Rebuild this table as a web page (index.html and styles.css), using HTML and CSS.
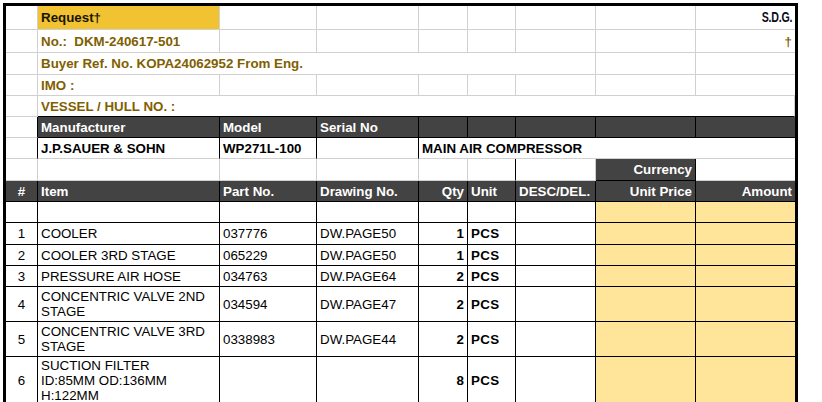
FILE: index.html
```html
<!DOCTYPE html>
<html lang="en">
<head>
<meta charset="utf-8">
<title>Request DKM-240617-501</title>
<link rel="stylesheet" href="styles.css">
</head>
<body>
<table class="sheet">
  <colgroup>
    <col class="c-no">
    <col class="c-item">
    <col class="c-part">
    <col class="c-draw">
    <col class="c-qty">
    <col class="c-unit">
    <col class="c-desc">
    <col class="c-price">
    <col class="c-amount">
  </colgroup>
  <tbody>
    <tr class="r-a">
      <td class="g"></td>
      <td class="g req">Request†</td>
      <td class="g"></td><td class="g"></td><td class="g"></td><td class="g"></td><td class="g"></td><td class="g"></td>
      <td class="g last right"><span class="sdg">S.D.G.</span></td>
    </tr>
    <tr class="r-b">
      <td class="g"></td>
      <td class="g brown">No.:&nbsp; DKM-240617-501</td>
      <td class="g"></td><td class="g"></td><td class="g"></td><td class="g"></td><td class="g"></td><td class="g"></td>
      <td class="g last brown right">†</td>
    </tr>
    <tr class="r-c">
      <td class="g"></td>
      <td class="g brown" colspan="6">Buyer Ref. No. KOPA24062952 From Eng.</td>
      <td class="g"></td>
      <td class="g last"></td>
    </tr>
    <tr class="r-d">
      <td class="g"></td>
      <td class="g brown">IMO :</td>
      <td class="g"></td><td class="g"></td><td class="g"></td><td class="g"></td><td class="g"></td><td class="g"></td>
      <td class="g last"></td>
    </tr>
    <tr class="r-e">
      <td class="g"></td>
      <td class="g brown bb" colspan="8">VESSEL / HULL NO. :</td>
    </tr>
    <tr class="r-f">
      <td class="g rb"></td>
      <td class="k dark">Manufacturer</td>
      <td class="k dark">Model</td>
      <td class="k dark">Serial No</td>
      <td class="k dark"></td><td class="k dark"></td><td class="k dark"></td><td class="k dark"></td>
      <td class="k dark last"></td>
    </tr>
    <tr class="r-g">
      <td class="g rb"></td>
      <td class="k bold gb">J.P.SAUER &amp; SOHN</td>
      <td class="k bold gb">WP271L-100</td>
      <td class="k gb"></td>
      <td class="k bold last gb" colspan="5">MAIN AIR COMPRESSOR</td>
    </tr>
    <tr class="r-h">
      <td class="g"></td><td class="g"></td><td class="g"></td><td class="g"></td><td class="g"></td>
      <td class="g rb"></td>
      <td class="g"></td>
      <td class="k dark right">Currency</td>
      <td class="g last"></td>
    </tr>
    <tr class="r-i">
      <td class="k dark center">#</td>
      <td class="k dark">Item</td>
      <td class="k dark">Part No.</td>
      <td class="k dark">Drawing No.</td>
      <td class="k dark right">Qty</td>
      <td class="k dark">Unit</td>
      <td class="k dark">DESC/DEL.</td>
      <td class="k dark right">Unit Price</td>
      <td class="k dark right last">Amount</td>
    </tr>
    <tr class="r-j">
      <td class="k"></td><td class="k"></td><td class="k"></td><td class="k"></td><td class="k"></td><td class="k"></td><td class="k"></td>
      <td class="k fill"></td>
      <td class="k fill last"></td>
    </tr>
    <tr class="r-1">
      <td class="k center">1</td>
      <td class="k">COOLER</td>
      <td class="k">037776</td>
      <td class="k">DW.PAGE50</td>
      <td class="k bold right">1</td>
      <td class="k pcs">PCS</td>
      <td class="k"></td>
      <td class="k fill"></td>
      <td class="k fill last"></td>
    </tr>
    <tr class="r-2">
      <td class="k center">2</td>
      <td class="k">COOLER 3RD STAGE</td>
      <td class="k">065229</td>
      <td class="k">DW.PAGE50</td>
      <td class="k bold right">1</td>
      <td class="k pcs">PCS</td>
      <td class="k"></td>
      <td class="k fill"></td>
      <td class="k fill last"></td>
    </tr>
    <tr class="r-3">
      <td class="k center">3</td>
      <td class="k">PRESSURE AIR HOSE</td>
      <td class="k">034763</td>
      <td class="k">DW.PAGE64</td>
      <td class="k bold right">2</td>
      <td class="k pcs">PCS</td>
      <td class="k"></td>
      <td class="k fill"></td>
      <td class="k fill last"></td>
    </tr>
    <tr class="r-4">
      <td class="k center">4</td>
      <td class="k">CONCENTRIC VALVE 2ND STAGE</td>
      <td class="k">034594</td>
      <td class="k">DW.PAGE47</td>
      <td class="k bold right">2</td>
      <td class="k pcs">PCS</td>
      <td class="k"></td>
      <td class="k fill"></td>
      <td class="k fill last"></td>
    </tr>
    <tr class="r-5">
      <td class="k center">5</td>
      <td class="k">CONCENTRIC VALVE 3RD STAGE</td>
      <td class="k">0338983</td>
      <td class="k">DW.PAGE44</td>
      <td class="k bold right">2</td>
      <td class="k pcs">PCS</td>
      <td class="k"></td>
      <td class="k fill"></td>
      <td class="k fill last"></td>
    </tr>
    <tr class="r-6">
      <td class="k center">6</td>
      <td class="k">SUCTION FILTER<br>ID:85MM OD:136MM<br>H:122MM</td>
      <td class="k"></td>
      <td class="k"></td>
      <td class="k bold right">8</td>
      <td class="k pcs">PCS</td>
      <td class="k"></td>
      <td class="k fill"></td>
      <td class="k fill last"></td>
    </tr>
  </tbody>
</table>
</body>
</html>
```

FILE: styles.css
```css
html, body {
  margin: 0;
  padding: 0;
  background: #ffffff;
}

body {
  font-family: "Liberation Sans", Arial, sans-serif;
  font-size: 13.33px;
  color: #000000;
}

.sheet {
  margin: 3px 0 0 3px;
  width: 795px;
  table-layout: fixed;
  border-collapse: separate;
  border-spacing: 0;
  border-top: 3px solid #000;
  border-left: 3px solid #000;
  border-right: 3px solid #000;
}

.c-no { width: 32px; }
.c-item { width: 182px; }
.c-part { width: 97px; }
.c-draw { width: 102px; }
.c-qty { width: 49px; }
.c-unit { width: 48px; }
.c-desc { width: 80px; }
.c-price { width: 100px; }
.c-amount { width: 99px; }

.sheet td {
  box-sizing: border-box;
  padding: 0 3px;
  vertical-align: middle;
  white-space: normal;
  overflow: hidden;
  line-height: 15px;
}

/* light spreadsheet grid */
.sheet td.g {
  border-right: 1px solid #d0d0d0;
  border-bottom: 1px solid #d0d0d0;
}

/* black ruled cells */
.sheet td.k {
  border-right: 1px solid #000;
  border-bottom: 1px solid #000;
}

.sheet td.last { border-right: none; }
.sheet td.rb { border-right-color: #000; }
.sheet td.bb { border-bottom-color: #000; }
.sheet td.gb { border-bottom-color: #d0d0d0; }

.r-a td { height: 24px; }
.r-b td { height: 23px; }
.r-c td { height: 22px; }
.r-d td { height: 21px; }
.r-e td { height: 21px; }
.r-f td { height: 21px; }
.r-g td { height: 21px; }
.r-h td { height: 22px; }
.r-i td { height: 21px; }
.r-j td { height: 21px; }
.r-1 td { height: 22px; }
.r-2 td { height: 21px; }
.r-3 td { height: 21px; }
.r-4 td { height: 35px; }
.r-5 td { height: 35px; }
.r-6 td { height: 48px; }

.req {
  background: #f1c232;
  font-weight: bold;
  color: #1b1400;
}

.brown {
  color: #7f6000;
  font-weight: bold;
  white-space: nowrap;
}

.sdg {
  display: inline-block;
  font-weight: 900;
  font-size: 14px;
  letter-spacing: -0.3px;
  color: #0b0b1a;
  transform: scaleX(0.76);
  transform-origin: right center;
}

.dark {
  background: #434343;
  color: #ffffff;
  font-weight: bold;
}

.bold { font-weight: bold; }
.right { text-align: right; }
.center { text-align: center; }

.pcs {
  font-weight: bold;
  letter-spacing: 0.4px;
}

.fill { background: #ffe599; }
```
